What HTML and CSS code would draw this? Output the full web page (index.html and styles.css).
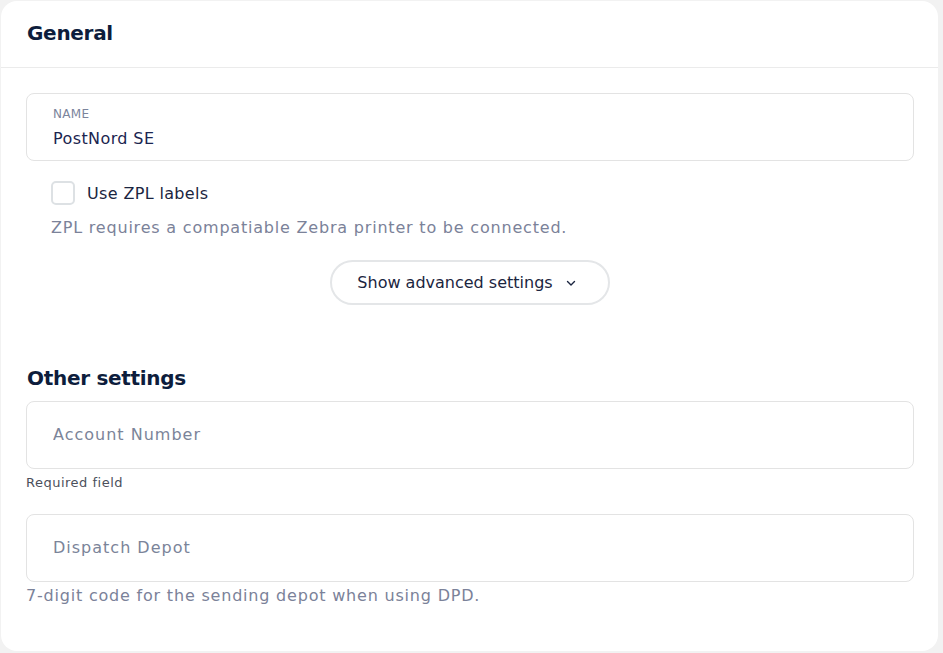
FILE: index.html
```html
<!DOCTYPE html>
<html lang="en">

<head>
    <meta charset="UTF-8">
    <meta name="viewport" content="width=device-width, initial-scale=1.0">
    <title>Carrier settings</title>
    <link rel="stylesheet" href="styles.css">
</head>

<body>
    <div class="card">
        <div class="card-header">
            <h2>General</h2>
        </div>
        <div class="card-body">
            <div class="field filled">
                <label for="name">NAME</label>
                <input type="text" id="name" value="PostNord SE">
            </div>
            <div class="check-row">
                <span class="checkbox"></span>
                <span>Use ZPL labels</span>
            </div>
            <p class="hint indent">ZPL requires a compatiable Zebra printer to be connected.</p>
            <div class="btn-row">
                <button type="button" class="btn-advanced">Show advanced settings
                    <svg width="12" height="12" viewBox="0 0 12 12"><path d="M2.5 4.5 6 8l3.5-3.5" fill="none" stroke="#1b2540" stroke-width="1.4" stroke-linecap="round" stroke-linejoin="round"/></svg>
                </button>
            </div>

            <h2 class="section-title">Other settings</h2>
            <div class="field">
                <input type="text" placeholder="Account Number">
            </div>
            <p class="required">Required field</p>
            <div class="field second">
                <input type="text" placeholder="Dispatch Depot">
            </div>
            <p class="hint">7-digit code for the sending depot when using DPD.</p>
        </div>
    </div>
</body>

</html>
```

FILE: styles.css
```css
* {
    margin: 0;
    padding: 0;
    box-sizing: border-box;
    font-family: "DejaVu Sans", sans-serif;
}

body {
    background: #f2f2f2;
    padding: 1px 5px 0 1px;
}

.card {
    background: #fff;
    border-radius: 16px;
    height: 650px;
}

.card-header {
    height: 67px;
    padding: 20px 26px 0;
    border-bottom: 1px solid #ebebeb;
}

h2 {
    font-size: 20px;
    font-weight: 700;
    color: #0d1d3c;
    letter-spacing: -0.3px;
}

.card-body {
    padding: 25px 24px 0 25px;
}

.field {
    height: 68px;
    border: 1px solid #e3e3e3;
    border-radius: 8px;
    padding: 0 26px;
    display: flex;
    flex-direction: column;
    justify-content: center;
}

.field.filled {
    justify-content: flex-start;
    padding-top: 12px;
}

.field label {
    font-size: 12px;
    color: #7b849c;
    line-height: 16px;
    letter-spacing: 0.3px;
    margin-bottom: 6px;
}

.field input {
    border: 0;
    outline: none;
    font-family: "DejaVu Sans", sans-serif;
    font-size: 16px;
    line-height: 22px;
    letter-spacing: 0.4px;
    color: #1b2550;
    background: transparent;
}

.field input::placeholder {
    color: #7b8499;
    letter-spacing: 1px;
}

.check-row {
    display: flex;
    align-items: center;
    gap: 12px;
    margin: 20px 0 0 25px;
    font-size: 16px;
    letter-spacing: 0.35px;
    color: #1b2540;
}

.checkbox {
    width: 24px;
    height: 24px;
    border: 2px solid #dde1e4;
    border-radius: 5px;
}

.hint {
    font-size: 16px;
    letter-spacing: 0.8px;
    color: #7b8299;
    margin-top: 13px;
}

.indent {
    margin-left: 25px;
}

.btn-row {
    display: flex;
    justify-content: center;
    margin-top: 23px;
}

.btn-advanced {
    width: 280px;
    height: 45px;
    border: 2px solid #e4e6e8;
    border-radius: 23px;
    background: #fff;
    font-family: "DejaVu Sans", sans-serif;
    font-size: 16px;
    color: #1b2540;
    display: flex;
    align-items: center;
    justify-content: center;
    gap: 12px;
    padding-right: 6px;
}

.section-title {
    margin-top: 60px;
    margin-left: 1px;
    margin-bottom: 10px;
    line-height: 26px;
}

.second {
    margin-top: 24px;
}

.required {
    font-size: 13px;
    letter-spacing: 0.5px;
    color: #4b505c;
    margin-top: 6px;
}

.field + .hint {
    margin-top: 4px;
}
```
